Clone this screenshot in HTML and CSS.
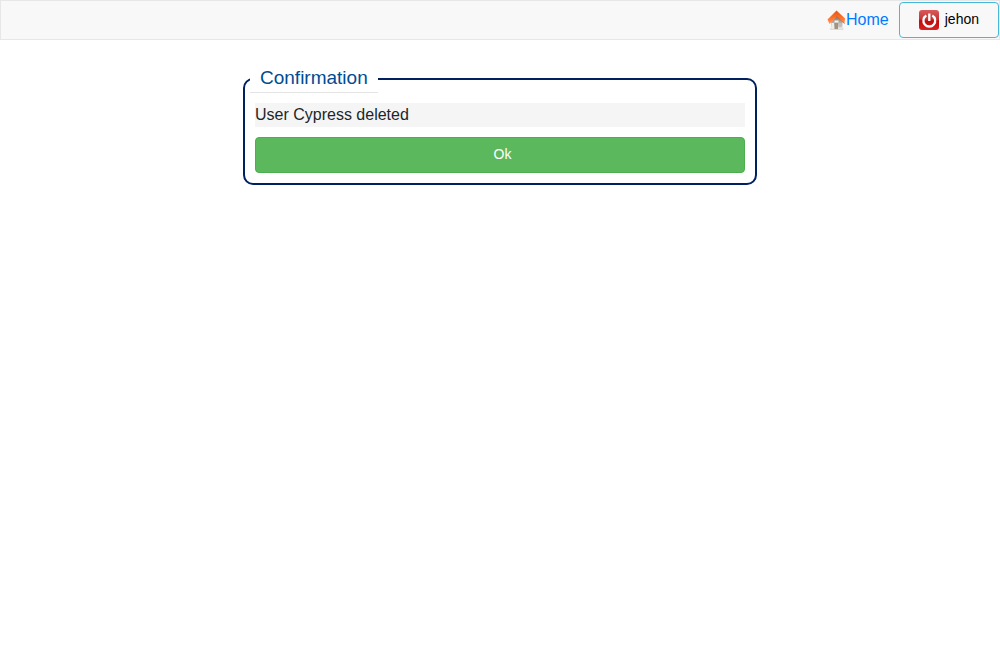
FILE: index.html
```html
<!DOCTYPE html>
<html lang="en">
<head>
<meta charset="utf-8">
<meta name="viewport" content="width=device-width, initial-scale=1">
<title>Confirmation</title>
<link rel="stylesheet" href="styles.css">
</head>
<body>
<header class="navbar">
  <a class="home" href="#"><svg class="home-icon" viewBox="0 0 20 20" aria-hidden="true">
      <defs>
        <linearGradient id="roof" x1="0" y1="0" x2="0" y2="1"><stop offset="0" stop-color="#e8521a"/><stop offset=".5" stop-color="#ff6d22"/><stop offset="1" stop-color="#ff9a5e"/></linearGradient>
        <linearGradient id="wall" x1="0" y1="0" x2="0" y2="1"><stop offset="0" stop-color="#77726c"/><stop offset="1" stop-color="#f0efec"/></linearGradient>
      </defs>
      <path d="M3.500 18.500h14.500l-2 1.500h-11z" fill="#c9c9c6"/>
      <path d="M5 12 10.500 6l6 6v7.500H5z" fill="url(#wall)"/>
      <path d="M8.500 13h3.500v6H8.500z" fill="#a3927c"/>
      <path d="M8.500 10.500h4v2h-4z" fill="#f4f2ef"/>
      <path d="M12.500 13h3v4h-3z" fill="#c4c0ba"/>
      <path d="M5.500 13h2.500v5.500H5.500z" fill="#efedea"/>
      <path d="M10.500.5 19 8.500l-.5 5-8-7-7 7.500-2-4.500z" fill="url(#roof)"/>
      <path d="m10.500 6.500 8 7" stroke="#cf4a1a" stroke-width=".7" fill="none"/>
    </svg>Home</a>
  <button class="user" type="button">
    <svg class="power-icon" viewBox="0 0 20 20" aria-hidden="true">
      <defs>
        <linearGradient id="red" x1="0" y1="0" x2="0" y2="1"><stop offset="0" stop-color="#d75b5b"/><stop offset=".45" stop-color="#c83535"/><stop offset=".55" stop-color="#be0c0c"/><stop offset="1" stop-color="#dc2020"/></linearGradient>
      </defs>
      <rect width="20" height="20" rx="3" fill="url(#red)"/>
      <path d="M7.300 5.500a5.900 5.900 0 1 0 6 0" fill="none" stroke="#fff" stroke-width="2.300"/>
      <path d="M10.300 3.500v7.500" stroke="#fff" stroke-width="2.300"/>
    </svg>
    <span>jehon</span>
  </button>
</header>
<main class="page">
  <form class="dialog">
    <fieldset class="panel">
      <legend class="panel-title">Confirmation</legend>
      <div class="message">User Cypress deleted</div>
      <button class="confirm" type="button">Ok</button>
    </fieldset>
  </form>
</main>
</body>
</html>
```
FILE: styles.css
```css
* {
  box-sizing: border-box;
}

body {
  margin: 0;
  background: #fff;
  color: #212529;
  font: 16px/24px "Liberation Sans", Arial, sans-serif;
}

.navbar {
  display: flex;
  justify-content: flex-end;
  align-items: center;
  gap: 10px;
  padding: 1px 0;
  border: 1px solid #e7e7e7;
  background: #f8f8f8;
}

.home {
  display: flex;
  align-items: center;
  color: #007bff;
  text-decoration: none;
  line-height: 36px;
}

.home-icon,
.power-icon {
  flex: none;
  width: 20px;
  height: 20px;
}

.user {
  display: flex;
  justify-content: center;
  align-items: center;
  gap: 6px;
  min-width: 100px;
  height: 36px;
  padding: 0 19px 2px;
  border: 1px solid #46b8da;
  border-radius: 4px;
  background: transparent;
  color: #000;
  font: inherit;
  font-size: 14px;
}

.power-icon {
  margin-top: 2px;
}

.page {
  padding: 25px 10px;
}

.dialog {
  max-width: 514px;
  margin: 0 auto;
}

.panel {
  min-width: 0;
  margin: 0;
  padding: 10px;
  border: 2px solid #002060;
  border-radius: 10px;
}

.panel-title {
  margin-left: -5px;
  padding: 0 10px 2px;
  border-bottom: 1px solid #e5e5e5;
  color: #004c92;
  font-size: 19px;
  line-height: 25px;
}

.message {
  margin-bottom: 10px;
  background: #f5f5f5;
}

.confirm {
  display: block;
  width: 100%;
  height: 36px;
  padding: 0 5px 2px 10px;
  border: 1px solid #4cae4c;
  border-radius: 4px;
  background: #5cb85c;
  color: #fff;
  font: inherit;
  font-size: 14px;
}
```
